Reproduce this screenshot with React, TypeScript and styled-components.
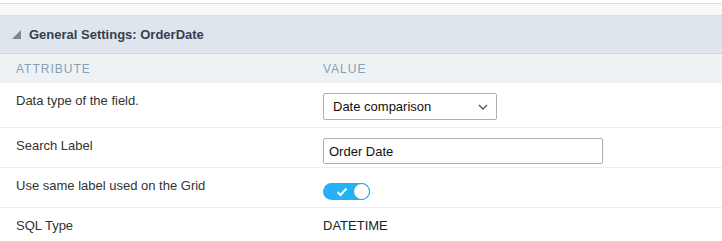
import React, { useState } from "react";
import styled, { createGlobalStyle } from "styled-components";

const GlobalStyle = createGlobalStyle`
  html, body {
    margin: 0;
    padding: 0;
    background: #ffffff;
  }
  body {
    font-family: "Liberation Sans", Arial, sans-serif;
    font-size: 13px;
    color: #333333;
  }
`;

const Page = styled.div`
  width: 722px;
  padding-top: 3px;
`;

const TopStrip = styled.div`
  height: 11px;
  background: #f7f9fb;
  border-top: 1px solid #d9dee3;
  border-bottom: 1px solid #d9dee3;
`;

const PanelHeader = styled.div`
  display: flex;
  align-items: center;
  gap: 8px;
  height: 37px;
  padding-left: 12px;
  background: #dfe5ec;
  border-bottom: 1px solid #cfd7df;
`;

const Title = styled.span`
  font-weight: bold;
  font-size: 13px;
  color: #35404e;
`;

const Table = styled.div`
  display: grid;
  grid-template-columns: 323px 1fr;
`;

const HeadCell = styled.div<{ $first?: boolean }>`
  height: 29px;
  display: flex;
  align-items: center;
  padding-left: ${(p) => (p.$first ? "16px" : "0")};
  background: #eef2f5;
  font-size: 12px;
  letter-spacing: 1px;
  text-transform: uppercase;
  color: #86a0b4;
`;

const Cell = styled.div<{ $h: number; $first?: boolean; $last?: boolean }>`
  height: ${(p) => p.$h}px;
  box-sizing: border-box;
  padding-left: ${(p) => (p.$first ? "16px" : "0")};
  padding-top: 10px;
  border-bottom: ${(p) => (p.$last ? "none" : "1px solid #eaeef2")};
  line-height: 16px;
  color: #333333;
`;

const Select = styled.div`
  display: flex;
  align-items: center;
  justify-content: space-between;
  box-sizing: border-box;
  width: 174px;
  height: 27px;
  padding: 0 8px 0 9px;
  border: 1px solid #a8b0b8;
  border-radius: 2px;
  background: #ffffff;
  font-size: 13px;
  color: #111111;
`;

const TextInput = styled.input`
  box-sizing: border-box;
  width: 280px;
  height: 26px;
  padding: 0 5px;
  border: 1px solid #a8b0b8;
  border-radius: 2px;
  font-family: "Liberation Sans", Arial, sans-serif;
  font-size: 13px;
  color: #111111;
  outline: none;
`;

const Toggle = styled.button<{ $on: boolean }>`
  position: relative;
  display: flex;
  align-items: center;
  width: 47px;
  height: 17px;
  padding: 0;
  margin-top: 5px;
  border: none;
  border-radius: 9px;
  background: ${(p) => (p.$on ? "#23b2f7" : "#c8d0d8")};
  cursor: pointer;
`;

const Knob = styled.span<{ $on: boolean }>`
  position: absolute;
  top: 0;
  left: ${(p) => (p.$on ? "30px" : "0")};
  box-sizing: border-box;
  width: 17px;
  height: 17px;
  border-radius: 50%;
  background: #ffffff;
  border: 1px solid #1a9fe0;
`;

const Check = styled.svg`
  position: absolute;
  left: 13px;
  top: 4px;
`;

const Value = styled.span`
  display: inline-block;
  color: #222222;
`;

export default function App() {
  const [same, setSame] = useState(true);
  return (
    <>
      <GlobalStyle />
      <Page>
        <TopStrip />
        <PanelHeader>
          <svg width="9" height="9" viewBox="0 0 9 9">
            <polygon points="9,0 9,9 0,9" fill="#7d8794" />
          </svg>
          <Title>General Settings: OrderDate</Title>
        </PanelHeader>
        <Table>
          <HeadCell $first>Attribute</HeadCell>
          <HeadCell>Value</HeadCell>

          <Cell $h={45} $first>
            Data type of the field.
          </Cell>
          <Cell $h={45}>
            <Select>
              <span>Date comparison</span>
              <svg width="10" height="6" viewBox="0 0 10 6">
                <polyline
                  points="1,1 5,5 9,1"
                  fill="none"
                  stroke="#555"
                  strokeWidth="1.4"
                />
              </svg>
            </Select>
          </Cell>

          <Cell $h={40} $first>
            Search Label
          </Cell>
          <Cell $h={40}>
            <TextInput defaultValue="Order Date" />
          </Cell>

          <Cell $h={40} $first>
            Use same label used on the Grid
          </Cell>
          <Cell $h={40}>
            <Toggle $on={same} onClick={() => setSame(!same)}>
              {same && (
                <Check width="12" height="10" viewBox="0 0 12 10">
                  <polyline
                    points="1.5,5 4.5,8 10.5,1.5"
                    fill="none"
                    stroke="#ffffff"
                    strokeWidth="2"
                  />
                </Check>
              )}
              <Knob $on={same} />
            </Toggle>
          </Cell>

          <Cell $h={33} $first $last>
            SQL Type
          </Cell>
          <Cell $h={33} $last>
            <Value>DATETIME</Value>
          </Cell>
        </Table>
      </Page>
    </>
  );
}
